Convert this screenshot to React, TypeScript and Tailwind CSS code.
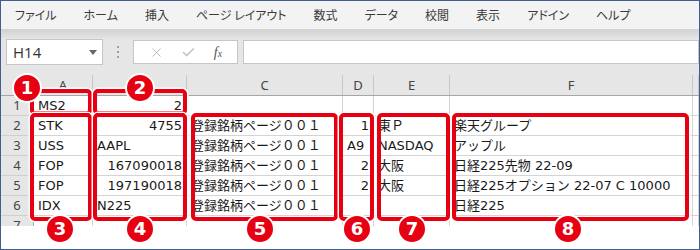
import { X, Check } from 'lucide-react'

const menus = ['ファイル', 'ホーム', '挿入', 'ページ レイアウト', '数式', 'データ', '校閲', '表示', 'アドイン', 'ヘルプ']

const C = '登録銘柄ページ００１'

// each row: [a, b, bRight, c, d, dRight, e, f]
const rows: [string, string, boolean, string, string, boolean, string, string][] = [
  ['MS2', '2', true, '', '', false, '', ''],
  ['STK', '4755', true, C, '1', true, '東Ｐ', '楽天グループ'],
  ['USS', 'AAPL', false, C, 'A9', false, 'NASDAQ', 'アップル'],
  ['FOP', '167090018', true, C, '2', true, '大阪', '日経225先物 22-09'],
  ['FOP', '197190018', true, C, '2', true, '大阪', '日経225オプション 22-07 C 10000'],
  ['IDX', 'N225', false, C, '', false, '', '日経225'],
  ['', '', false, '', '', false, '', ''],
]

const cols = 'grid grid-cols-[33px_59px_94px_156px_31px_76px_243px_1fr]'

// red highlight frames: left, top, width, height
const boxes = [
  [29, 88, 62, 26],
  [92, 88, 94, 26],
  [29, 112, 62, 108],
  [92, 112, 94, 108],
  [190, 112, 147, 108],
  [338, 112, 35, 108],
  [376, 112, 73, 108],
  [451, 112, 237, 108],
]

const badges: [number, number, string][] = [
  [26, 87, '1'],
  [139, 87, '2'],
  [59, 228, '3'],
  [139, 228, '4'],
  [259, 228, '5'],
  [356, 228, '6'],
  [411, 228, '7'],
  [567, 228, '8'],
]

function Cell({ text, right }: { text: string; right?: boolean }) {
  return (
    <div
      className={`h-[20px] border-r border-b border-[#d4d4d4] overflow-hidden whitespace-nowrap leading-[19px] ${
        right ? 'text-right pr-[4px]' : 'pl-[4px]'
      }`}
    >
      {text}
    </div>
  )
}

export default function App() {
  return (
    <div
      className="relative w-[700px] h-[250px] overflow-hidden border border-[#3f5f8e] bg-white flex flex-col text-[#1a1a1a]"
      style={{ fontFamily: '"DejaVu Sans", "Noto Sans CJK JP", sans-serif' }}
    >
      {/* Ribbon tabs */}
      <div className="h-[28px] shrink-0 bg-[#f3f3f3] flex items-center gap-[27px] pl-[14px] text-[12px] text-[#3a3a3a] [font-family:'Noto_Sans_CJK_JP',sans-serif] [font-feature-settings:'palt']">
        {menus.map((m) => (
          <span key={m}>{m}</span>
        ))}
      </div>
      <div className="h-[9px] shrink-0 bg-gradient-to-b from-[#d2d2d2] to-[#e2e2e2]" />

      {/* Formula bar */}
      <div className="h-[28px] shrink-0 bg-[#e6e6e6] flex items-center pl-[5px]">
        <div className="w-[97px] h-[26px] bg-white border border-[#c6c6c6] flex items-center justify-between pl-[6px] pr-[5px]">
          <span className="text-[15px] text-[#333] [font-family:'Open_Sans',sans-serif]">H14</span>
          <svg width="8" height="5" viewBox="0 0 8 5">
            <polygon points="0,0 8,0 4,5" fill="#666" />
          </svg>
        </div>
        <div className="w-[30px] flex flex-col items-center gap-[3px]">
          <span className="w-[2px] h-[2px] bg-[#a0a0a0]" />
          <span className="w-[2px] h-[2px] bg-[#a0a0a0]" />
          <span className="w-[2px] h-[2px] bg-[#a0a0a0]" />
        </div>
        <div className="w-[105px] h-[24px] bg-white border border-[#c6c6c6] flex items-center justify-around px-[6px]">
          <X size={15} strokeWidth={1.5} className="text-[#b4b4b4]" />
          <Check size={15} strokeWidth={2.5} className="text-[#c4c4c4]" />
          <span className="italic text-[14px] text-[#555] [font-family:'Liberation_Serif',serif]">
            f<span className="text-[10px]">x</span>
          </span>
        </div>
        <div className="flex-1 ml-[5px] h-[24px] bg-white border border-[#c6c6c6]" />
      </div>

      {/* Sheet */}
      <div className="h-[160px] shrink-0 overflow-hidden bg-[#e6e6e6] pt-[9px] text-[13px]">
        <div className={`${cols} h-[21px] border-b border-[#a6a6a6] text-[#444] [font-family:'Noto_Sans',sans-serif]`}>
          <div className="border-r border-[#bdbdbd]" />
          {['A', 'B', 'C', 'D', 'E', 'F', ''].map((h, i) => (
            <div key={i} className="border-r border-[#c8c8c8] text-center leading-[20px]">
              {h}
            </div>
          ))}
        </div>
        {rows.map((r, i) => (
          <div key={i} className={`${cols} bg-white`}>
            <div className="h-[20px] bg-[#e6e6e6] border-r border-b border-r-[#a6a6a6] border-b-[#d0d0d0] text-center leading-[19px] text-[#444] [font-family:'Noto_Sans',sans-serif]">
              {i + 1}
            </div>
            <Cell text={r[0]} />
            <Cell text={r[1]} right={r[2]} />
            <Cell text={r[3]} />
            <Cell text={r[4]} right={r[5]} />
            <Cell text={r[6]} />
            <Cell text={r[7]} />
            <Cell text="" />
          </div>
        ))}
      </div>

      {/* Highlight frames */}
      {boxes.map(([l, t, w, h], i) => (
        <div
          key={i}
          className="absolute border-[4px] border-[#e60012] rounded-[5px] shadow-[0_0_0_1.5px_#fff]"
          style={{ left: l, top: t, width: w, height: h }}
        />
      ))}

      {/* Number badges */}
      {badges.map(([x, y, n]) => (
        <div
          key={n}
          className="absolute w-[30px] h-[30px] -ml-[15px] -mt-[15px] rounded-full bg-[#e60012] border-2 border-white flex items-center justify-center text-white text-[18px] font-bold leading-none [font-family:'DejaVu_Sans',sans-serif]"
          style={{ left: x, top: y }}
        >
          {n}
        </div>
      ))}
    </div>
  )
}
